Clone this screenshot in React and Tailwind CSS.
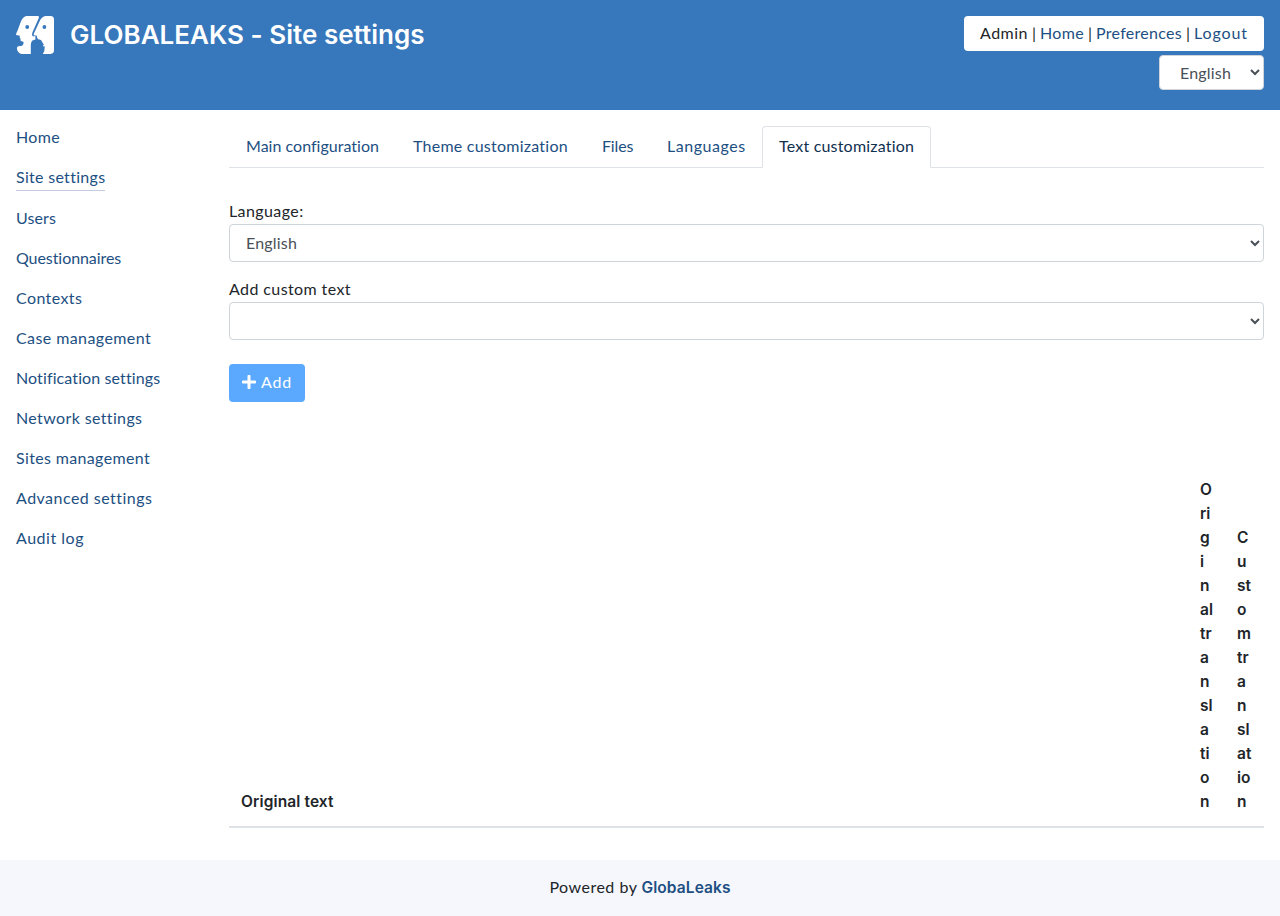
import React from 'react';
import { FaPlus } from 'react-icons/fa';

const menu = [
  ['Home', 'tracking-[0.34px]'],
  ['Site settings', 'tracking-[0.3px]'],
  ['Users', 'tracking-[0.11px]'],
  ['Questionnaires', 'tracking-[-0.07px]'],
  ['Contexts', 'tracking-[0.4px]'],
  ['Case management', 'tracking-[0.41px]'],
  ['Notification settings', 'tracking-[0.11px]'],
  ['Network settings', 'tracking-[0.37px]'],
  ['Sites management', 'tracking-[0.35px]'],
  ['Advanced settings', 'tracking-[0.47px]'],
  ['Audit log', 'tracking-[0.52px]'],
];

const tabs = [
  ['Main configuration', 'w-[167px] tracking-[0.02px]'],
  ['Theme customization', 'w-[189px] tracking-[0.24px]'],
  ['Files', 'w-[65px] tracking-[-0.15px]'],
  ['Languages', 'w-[112px] tracking-[0.54px]'],
  ['Text customization', 'w-[169px] tracking-[0.2px]'],
];

const originalLines = ['O', 'ri', 'g', 'i', 'n', 'al', 'tr', 'a', 'n', 'sl', 'a', 'ti', 'o', 'n'];
const customLines = ['C', 'u', 'st', 'o', 'm', 'tr', 'a', 'n', 'sl', 'at', 'io', 'n'];

function Logo() {
  return (
    <svg viewBox="0 0 38 38" className="block h-[38px] w-[38px]" fill="#fff" fillRule="evenodd">
      <path d="M10.2 0H21.8Q23.6 .2 22.8 2L16.4 16.5Q15.4 19.4 16.8 20.2H19.4V23.4L16.4 24.4Q14.8 26 14.8 29V38H5.5Q1.4 37 .9 32.6Q1 30.2 2.5 30.2L6.2 29.8Q7.8 28.8 7.6 26L4.6 24.8L4.4 22.6L3.6 21.4L3.9 19.8L0 18.9Q0 17.4 1.4 15L4.7 6Q6.6 .8 10.2 0ZM11.2 9.1a1.9 1.9 0 1 0 .01 3.8a1.9 1.9 0 1 0-.01-3.8Z" />
      <path d="M29.5 0H34.6Q38 .2 38 3.6V34.6Q37.8 37.8 34.6 38H26.8Q28.8 35.4 28.8 30.4L26.8 30.2L27.8 28.4L25.8 25.4Q25.6 23.4 22 23.2L20.8 20.8L21 19.8L17.6 19.2Q17.4 17.6 19 15.2L23.6 5.2Q26 .4 29.5 0ZM28.4 9.1a1.9 1.9 0 1 0 .01 3.8a1.9 1.9 0 1 0-.01-3.8Z" />
    </svg>
  );
}

function FormSelect({ value }) {
  return (
    <select
      defaultValue={value}
      className="block h-[38px] w-full rounded border border-[#ced4da] bg-white px-3 pb-0.5 text-base tracking-[0.18px] text-[#495057]"
    >
      <option>{value}</option>
    </select>
  );
}

export default function App() {
  return (
    <div className="flex h-[916px] flex-col bg-white font-['Lato','Noto_Sans',sans-serif] text-base leading-6 text-[#212529]">
      <header className="flex h-[110px] shrink-0 items-start justify-between bg-[#3777bc] p-4">
        <div className="flex items-start">
          <Logo />
          <h1 className="ml-4 whitespace-nowrap font-['Inter','Noto_Sans',sans-serif] text-[26px] font-semibold leading-[37px] tracking-[0.02px] text-white">
            GLOBALEAKS - Site settings
          </h1>
        </div>
        <div className="flex flex-col items-end gap-1">
          <div className="flex h-[35px] w-[300px] items-center justify-between rounded bg-white px-4 pb-0.5 text-[#1d4f82]">
            <span className="tracking-[0.49px] text-[#212529]">Admin</span>
            <span className="text-[#212529]">|</span>
            <a className="tracking-[0.34px]">Home</a>
            <span className="text-[#212529]">|</span>
            <a className="tracking-[0.29px]">Preferences</a>
            <span className="text-[#212529]">|</span>
            <a className="tracking-[0.9px]">Logout</a>
          </div>
          <select
            defaultValue="English"
            className="h-[35px] w-[105px] rounded border border-[#ced4da] bg-white pb-px pl-4 text-base tracking-[0.18px] text-[#495057]"
          >
            <option>English</option>
          </select>
        </div>
      </header>

      <div className="flex min-h-0 flex-1">
        <nav className="flex w-[213px] shrink-0 flex-col items-start gap-4 pl-4 pt-4 leading-[22px] text-[#1d4f82]">
          {menu.map(([label, tracking]) => (
            <a
              key={label}
              className={`${tracking} whitespace-nowrap pb-0.5 ${label === 'Site settings' ? 'border-b border-[#c3cbe0]' : ''}`}
            >
              {label}
            </a>
          ))}
        </nav>

        <main className="flex flex-1 flex-col pl-4 pr-4 pt-4">
          <div className="flex h-[42px] border-b border-[#dee2e6]">
            {tabs.map(([label, style]) => (
              <a
                key={label}
                className={`${style} h-[42px] shrink-0 whitespace-nowrap rounded-t border px-4 pt-2 leading-[22px] ${
                  label === 'Text customization'
                    ? 'border-[#dee2e6] border-b-white bg-white text-[#0f304f]'
                    : 'border-transparent text-[#1d4f82]'
                }`}
              >
                {label}
              </a>
            ))}
          </div>

          <div className="mt-8">
            <div className="pb-0.5 leading-[22px] tracking-[0.4px]">Language:</div>
            <FormSelect value="English" />
          </div>
          <div className="mt-4">
            <div className="pb-0.5 leading-[22px] tracking-[0.4px]">Add custom text</div>
            <FormSelect value="" />
          </div>
          <button className="mt-6 flex h-[38px] w-[76px] items-center rounded bg-[#5aa9ff] pb-0.5 pl-[13px] text-white">
            <FaPlus className="h-4 w-[14px]" />
            <span className="ml-[5px] tracking-[0.8px]">Add</span>
          </button>

          <div className="mt-16 flex items-end border-b-2 border-[#dee2e6] px-3 pb-3 pt-3 font-['Inter','Noto_Sans',sans-serif] text-[15.5px] font-semibold">
            <div className="flex-1 tracking-[0.12px]">Original text</div>
            <div className="w-[37px]">
              {originalLines.map((line, i) => <div key={i}>{line}</div>)}
            </div>
            <div className="w-[15px]">
              {customLines.map((line, i) => <div key={i}>{line}</div>)}
            </div>
          </div>
        </main>
      </div>

      <footer className="flex h-14 shrink-0 items-center justify-center bg-[#f5f7fc]">
        <span className="mr-1 pb-0.5 leading-[22px] tracking-[0.5px]">Powered by</span>
        <a className="font-['Inter','Noto_Sans',sans-serif] text-[15.5px] font-semibold tracking-[0.1px] text-[#1d4f82]">GlobaLeaks</a>
      </footer>
    </div>
  );
}
